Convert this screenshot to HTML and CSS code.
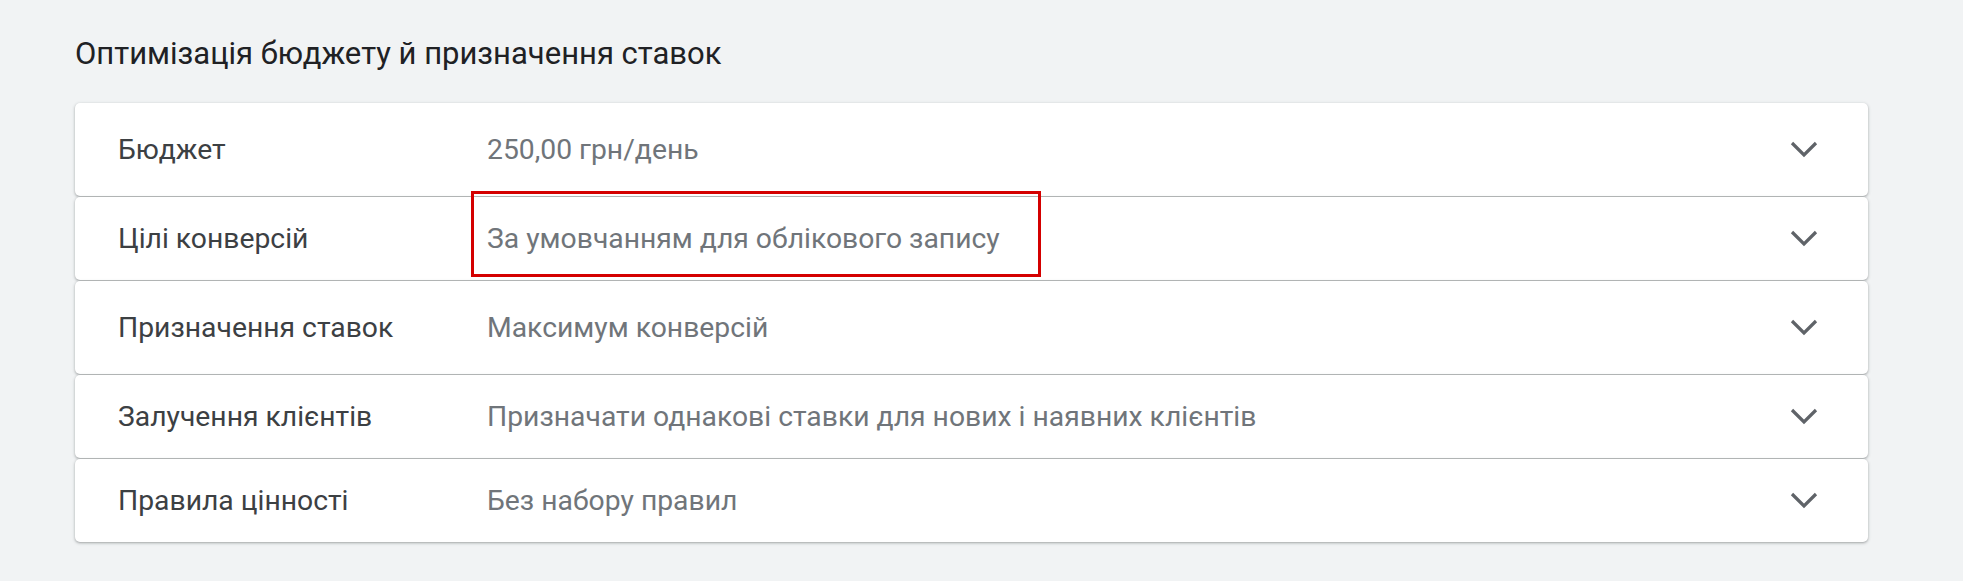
FILE: index.html
```html
<!DOCTYPE html>
<html lang="uk">
<head>
  <meta charset="UTF-8">
  <meta name="viewport" content="width=device-width, initial-scale=1.0">
  <title>Оптимізація бюджету й призначення ставок</title>
  <link rel="stylesheet" href="styles.css">
</head>
<body>
  <div class="sekcia">
    <h2 class="zagolovok">Оптимізація бюджету й призначення ставок</h2>

    <div class="spysok">
      <div class="ryadok ryadok--vysokyi">
        <div class="nazva">Бюджет</div>
        <div class="znachennia">250,00 грн/день</div>
        <svg class="strilka" viewBox="0 0 28 17"><path d="M2 2 L14 14 L26 2"/></svg>
      </div>
      <div class="ryadok">
        <div class="nazva">Цілі конверсій</div>
        <div class="znachennia">За умовчанням для облікового запису</div>
        <svg class="strilka" viewBox="0 0 28 17"><path d="M2 2 L14 14 L26 2"/></svg>
        <!-- червона рамка-позначка поверх рядка -->
        <div class="pozna4ka"></div>
      </div>
      <div class="ryadok ryadok--vysokyi">
        <div class="nazva">Призначення ставок</div>
        <div class="znachennia">Максимум конверсій</div>
        <svg class="strilka" viewBox="0 0 28 17"><path d="M2 2 L14 14 L26 2"/></svg>
      </div>
      <div class="ryadok">
        <div class="nazva">Залучення клієнтів</div>
        <div class="znachennia">Призначати однакові ставки для нових і наявних клієнтів</div>
        <svg class="strilka" viewBox="0 0 28 17"><path d="M2 2 L14 14 L26 2"/></svg>
      </div>
      <div class="ryadok">
        <div class="nazva">Правила цінності</div>
        <div class="znachennia">Без набору правил</div>
        <svg class="strilka" viewBox="0 0 28 17"><path d="M2 2 L14 14 L26 2"/></svg>
      </div>
    </div>
  </div>
</body>
</html>
```

FILE: styles.css
```css
body {
  margin: 0;
  padding: 0;
  background: #f1f3f4;
  font-family: "Roboto", "Liberation Sans", sans-serif;
  min-height: 100vh;
}

.sekcia {
  padding: 0 95px 0 75px;
}

.zagolovok {
  margin: 0 0 31px;
  padding-top: 36px;
  font-size: 31px;
  font-weight: 400;
  color: #202124;
  line-height: 36px;
}

/* Список карток */
.spysok {
  display: flex;
  flex-direction: column;
  gap: 1px;
}

.ryadok {
  position: relative;
  display: flex;
  align-items: center;
  height: 83px;
  padding: 0 50px 0 43px;
  background: #fff;
  border-radius: 5px;
  box-shadow: 0 1px 2px rgba(60, 64, 67, 0.3), 0 1px 3px 1px rgba(60, 64, 67, 0.12);
}

.ryadok--vysokyi {
  height: 93px;
}

.nazva {
  width: 369px;
  flex-shrink: 0;
  font-size: 28.3px;
  color: #3c4043;
}

.znachennia {
  flex: 1;
  font-size: 28.3px;
  color: #70757a;
}

.strilka {
  width: 28px;
  height: 17px;
  fill: none;
  stroke: #5f6368;
  stroke-width: 3.2px;
}

.pozna4ka {
  position: absolute;
  left: 396px;
  top: -6px;
  width: 570px;
  height: 86px;
  box-sizing: border-box;
  border: 3px solid #d40000;
}
```
